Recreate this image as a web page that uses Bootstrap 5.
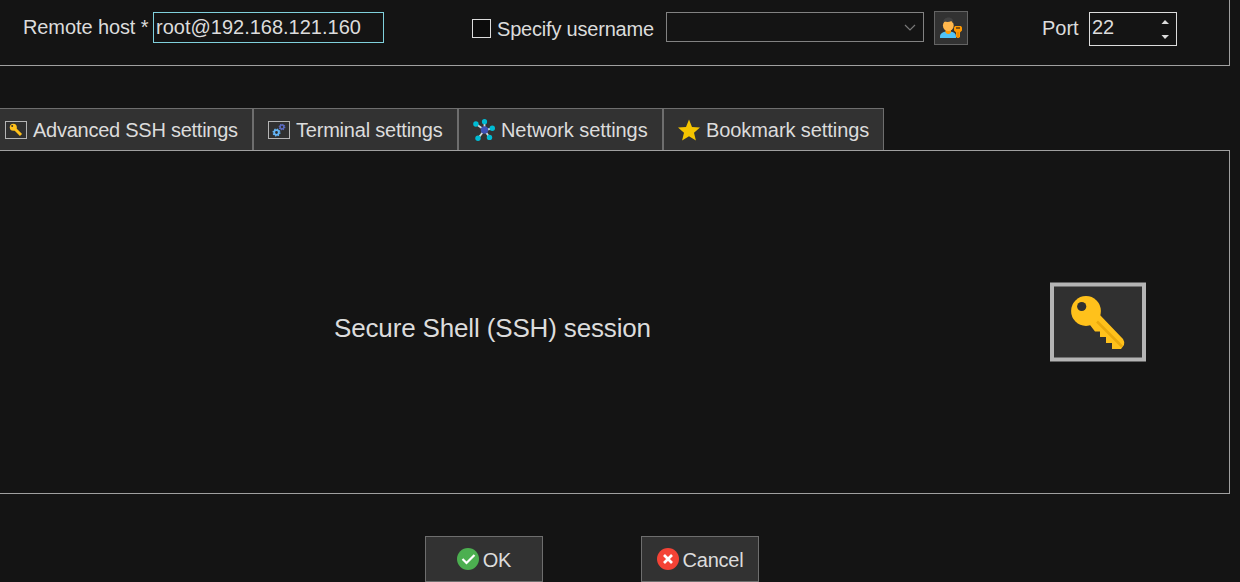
<!DOCTYPE html>
<html lang="en">
<head>
  <meta charset="UTF-8" />
  <meta name="viewport" content="width=device-width, initial-scale=1" />
  <title>Session settings</title>
  <link href="https://cdn.jsdelivr.net/npm/bootstrap@5.3.3/dist/css/bootstrap.min.css" rel="stylesheet" />
  <style>
    body {
      background-color: #141414;
      color: #dcdcdc;
      font-family: "Liberation Sans", sans-serif;
      font-size: 20px;
      line-height: 24px;
      height: 582px;
      overflow: hidden;
    }
    svg {
      display: block;
      flex: none;
    }
    .panel-line {
      width: 1230px;
      border: 0 solid #a0a0a0;
      border-right-width: 1px;
      border-bottom-width: 1px;
    }
    .host-panel {
      height: 66px;
      padding: 11px 0 0 23px;
    }
    .host-label {
      width: 130px;
      padding-top: 4px;
      letter-spacing: -0.1px;
    }
    .field {
      background-color: #141414;
      color: #dcdcdc;
      border: 1px solid #828282;
      border-radius: 0;
      outline: 0;
    }
    .host-input {
      width: 231px;
      height: 31px;
      margin-top: 1px;
      padding: 0 0 1px 2px;
      border-color: #80d0dc;
    }
    .user-check {
      width: 194px;
      margin-left: 88px;
      padding-top: 6px;
    }
    .user-check .form-check-input {
      width: 19px;
      height: 19px;
      margin: 2px 6px 0 0;
      background-color: #0c0c0c;
      border: 1px solid #dcdcdc;
      border-radius: 0;
    }
    .user-check label {
      letter-spacing: -0.2px;
    }
    .user-combo {
      width: 258px;
      height: 30px;
      margin-top: 1px;
      padding: 1px 7px 0 0;
    }
    .tool-btn {
      width: 34px;
      height: 34px;
      margin-left: 10px;
      padding: 0;
      background-color: #323232;
      border: 1px solid #646464;
      border-radius: 0;
    }
    .port-label {
      width: 47px;
      margin-left: 74px;
      padding-top: 5px;
    }
    .port-box {
      width: 88px;
      height: 34px;
      margin-top: 1px;
      padding: 2px 7px 0 2px;
      border-color: #dcdcdc;
    }
    .tab-row {
      height: 42px;
      margin-top: 42px;
    }
    .tab-row .tab-item {
      width: 205px;
      padding: 0 0 0 14px;
      color: #dcdcdc;
      background-color: #323232;
      border: 1px solid #6e6e6e;
      border-bottom: 0;
      border-radius: 0;
      gap: 6px;
      white-space: nowrap;
    }
    .tab-row .tab-ssh {
      width: 253px;
      padding-left: 5px;
      border-left: 0;
      letter-spacing: -0.25px;
    }
    .tab-row .tab-bookmark {
      width: 221px;
    }
    .tight { letter-spacing: -0.21px; }
    .snug { letter-spacing: -0.08px; }
    .session-panel {
      height: 344px;
      border-top-width: 1px;
    }
    .session-title {
      width: 716px;
      margin-left: 334px;
      padding-top: 11px;
      font-size: 26px;
      line-height: 32px;
      letter-spacing: -0.15px;
    }
    .action-row {
      margin: 42px 0 0 425px;
      gap: 98px;
    }
    .action-btn {
      width: 118px;
      height: 46px;
      padding: 0;
      gap: 4px;
      color: #dcdcdc;
      background-color: #323232;
      border: 1px solid #6e6e6e;
      border-radius: 0;
      font-size: 20px;
    }
    .action-btn span {
      padding-top: 2px;
      letter-spacing: -0.25px;
    }
  </style>
</head>
<body>

<!-- Host settings -->
<div class="panel-line host-panel d-flex align-items-start">
  <label class="host-label" for="remoteHost">Remote host *</label>
  <input type="text" class="field host-input" id="remoteHost" value="root@192.168.121.160" />

  <div class="user-check d-flex">
    <input type="checkbox" class="form-check-input" id="specifyUser" />
    <label for="specifyUser">Specify username</label>
  </div>
  <div class="field user-combo d-flex align-items-center justify-content-end">
    <svg width="12" height="8" viewBox="0 0 12 8"><path d="M1 1l5 5 5-5" fill="none" stroke="#787878" stroke-width="1.2" /></svg>
  </div>
  <button type="button" class="tool-btn d-flex align-items-center justify-content-center" aria-label="Users">
    <svg width="24" height="22" viewBox="0 0 24 22">
      <path d="M1 21v-1.500c0-3 3-4.500 6-5h4c4 .500 6 2 6 5V21z" fill="#4fc3f7" />
      <path d="M6.500 12h5.500v3.500q-2.700 3-5.500 0z" fill="#ff9800" />
      <ellipse cx="9.300" cy="8.500" rx="5.400" ry="5.600" fill="#ffb74d" />
      <path d="M4.300 6.500c-.300-4 2-6 5.200-6 3.500 0 5.200 2.300 4.800 6L12.500 4q-3.500 1.500-7 .500z" fill="#424242" />
      <path d="M16 9h6l1 1.500v3l-2 2V20l-1.500 1h-1L17 20v-4.500l-2-2v-3z" fill="#ff9800" />
      <path d="M17 11h4" stroke="#5c3b10" stroke-width="1.500" />
      <path d="M19 15v5" stroke="#d67a00" />
    </svg>
  </button>

  <label class="port-label">Port</label>
  <div class="field port-box d-flex justify-content-between">
    <span>22</span>
    <svg width="8" height="28" viewBox="0 0 8 28"><path d="M.5 9L4 5l4 4zM.5 20L4 24l4-4z" fill="#dcdcdc" /></svg>
  </div>
</div>

<!-- Tabs -->
<div class="tab-row d-flex">
  <button type="button" class="tab-item tab-ssh d-flex align-items-center">
    <svg width="22" height="18" viewBox="0 0 22 18">
      <rect x=".5" y=".5" width="21" height="17" fill="#303030" stroke="#b4b4b4" />
      <path d="M9.500 7.500l6.500 6.500" stroke="#ffc11b" stroke-width="3" />
      <circle cx="8.300" cy="6.200" r="3.500" fill="#ffc11b" />
      <circle cx="7.200" cy="5" r="1" fill="#303030" />
    </svg>
    <span>Advanced SSH settings</span>
  </button>
  <button type="button" class="tab-item d-flex align-items-center">
    <svg width="22" height="18" viewBox="0 0 22 18">
      <rect x=".5" y=".5" width="21" height="17" fill="#303030" stroke="#b4b4b4" />
      <circle cx="8.500" cy="11.500" r="3.300" fill="none" stroke="#64b5f6" stroke-width="1.500" stroke-dasharray="1.300 1.290" />
      <circle cx="8.500" cy="11.500" r="2.300" fill="none" stroke="#64b5f6" stroke-width="1.800" />
      <circle cx="14" cy="6" r="2.700" fill="none" stroke="#5c6bc0" stroke-width="1.300" stroke-dasharray="1.060" />
      <circle cx="14" cy="6" r="1.900" fill="none" stroke="#5c6bc0" stroke-width="1.500" />
    </svg>
    <span class="tight">Terminal settings</span>
  </button>
  <button type="button" class="tab-item d-flex align-items-center">
    <svg width="22" height="22" viewBox="0 0 22 22">
      <path d="M11.500 11V3M11.500 11L3 5M11.500 11l8-1.500M11.500 11L5 19.500M11.500 11l5 7.500" stroke="#cfd8dc" stroke-width="1.800" />
      <circle cx="11.500" cy="11" r="3.700" fill="#3f51b5" />
      <g fill="#00bcd4">
        <circle cx="11.500" cy="2.700" r="2.600" />
        <circle cx="2.900" cy="5" r="2.700" />
        <circle cx="19.300" cy="9.300" r="2.700" />
        <circle cx="5" cy="19.200" r="2.700" />
        <circle cx="16.500" cy="18.400" r="2.700" />
      </g>
    </svg>
    <span class="snug">Network settings</span>
  </button>
  <button type="button" class="tab-item tab-bookmark d-flex align-items-center">
    <svg width="22" height="22" viewBox="0 0 22 22">
      <path d="M11 .5l3 7.500 8 .600-6 5.200 1.900 7.700-6.900-4.200-6.900 4.200L6 13.800 0 8.600 8 8z" fill="#f4c400" />
    </svg>
    <span class="snug">Bookmark settings</span>
  </button>
</div>

<!-- Session type -->
<div class="panel-line session-panel d-flex align-items-center">
  <div class="session-title">Secure Shell (SSH) session</div>
  <svg width="96" height="80" viewBox="0 0 96 80">
    <rect x="2" y="2.500" width="92" height="75" fill="#303030" stroke="#b4b4b4" stroke-width="4" />
    <path d="M40 43L50 33 73 57q2 3 1 6l-3 4H62v-6H56v-6H50v-5.500H45z" fill="#ffc11b" />
    <path d="M47 39.500l25 25" stroke="#e9a90c" stroke-width="2.500" />
    <circle cx="36" cy="29" r="14.900" fill="#ffc11b" />
    <circle cx="31.700" cy="24.500" r="4.600" fill="#303030" />
  </svg>
</div>

<!-- Buttons -->
<div class="action-row d-flex">
  <button type="button" class="action-btn d-flex align-items-center justify-content-center">
    <svg width="22" height="22" viewBox="0 0 22 22">
      <circle cx="11" cy="11" r="11" fill="#4caf50" />
      <path d="M5.500 11l4 4 8-8" fill="none" stroke="#fff" stroke-width="2.200" />
    </svg>
    <span>OK</span>
  </button>
  <button type="button" class="action-btn d-flex align-items-center justify-content-center">
    <svg width="22" height="22" viewBox="0 0 22 22">
      <circle cx="11" cy="11" r="11" fill="#f44336" />
      <path d="M7 7l8 8M15 7l-8 8" stroke="#fff" stroke-width="2.700" />
    </svg>
    <span>Cancel</span>
  </button>
</div>

<script src="https://cdn.jsdelivr.net/npm/bootstrap@5.3.3/dist/js/bootstrap.bundle.min.js"></script>
</body>
</html>
